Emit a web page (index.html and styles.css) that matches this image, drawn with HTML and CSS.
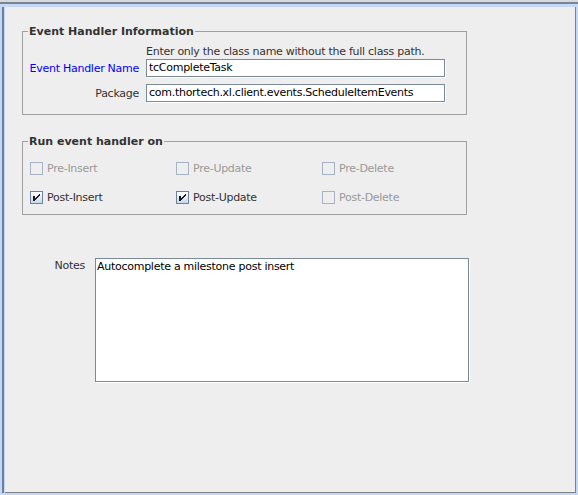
FILE: index.html
```html
<!DOCTYPE html>
<html>
<head>
<meta charset="utf-8">
<link rel="stylesheet" href="styles.css">
</head>
<body>
<div class="titlebar"></div>
<div class="frame">
  <div class="pane">
    <div class="content">
      <fieldset class="group group-info">
        <legend>Event Handler Information</legend>
        <div class="hint">Enter only the class name without the full class path.</div>
        <div class="form">
          <label class="lbl lbl-blue">Event Handler Name</label>
          <div class="field">tcCompleteTask</div>
          <label class="lbl">Package</label>
          <div class="field">com.thortech.xl.client.events.ScheduleItemEvents</div>
        </div>
      </fieldset>
      <fieldset class="group group-run">
        <legend>Run event handler on</legend>
        <div class="checks">
          <div class="check disabled"><span class="cb"></span><span class="cl">Pre-Insert</span></div>
          <div class="check disabled"><span class="cb"></span><span class="cl">Pre-Update</span></div>
          <div class="check disabled"><span class="cb"></span><span class="cl">Pre-Delete</span></div>
          <div class="check"><span class="cb on"><svg width="11" height="11" viewBox="1 1 11 11"><path d="M3 5h2v5h-2z M9 3h1v2h-1z M8 4h1v2h-1z M7 5h1v2h-1z M6 6h1v2h-1z M5 7h1v2h-1z" fill="#1a1a1a"/></svg></span><span class="cl">Post-Insert</span></div>
          <div class="check"><span class="cb on"><svg width="11" height="11" viewBox="1 1 11 11"><path d="M3 5h2v5h-2z M9 3h1v2h-1z M8 4h1v2h-1z M7 5h1v2h-1z M6 6h1v2h-1z M5 7h1v2h-1z" fill="#1a1a1a"/></svg></span><span class="cl">Post-Update</span></div>
          <div class="check disabled"><span class="cb"></span><span class="cl">Post-Delete</span></div>
        </div>
      </fieldset>
      <div class="notes">
        <div class="notes-label">Notes</div>
        <div class="textarea">Autocomplete a milestone post insert</div>
      </div>
    </div>
  </div>
</div>
</body>
</html>
```
FILE: styles.css
```css
html, body {
  margin: 0;
  padding: 0;
}
body {
  width: 578px;
  height: 495px;
  overflow: hidden;
  background: #c6d8f4;
  font-family: "DejaVu Sans", sans-serif;
  font-size: 11px;
  letter-spacing: -0.27px;
  color: #333333;
}
.titlebar {
  height: 2px;
  background: #d9d9d9;
  border-bottom: 2px solid #77859b;
}
.frame {
  padding: 3px 2px 2px 2px;
}
.pane {
  border-left: 2px solid #6b7fa0;
  padding-left: 1px;
}
.content {
  box-sizing: border-box;
  height: 486px;
  background: #eeeeee;
  border-right: 1px solid #808080;
  border-bottom: 1px solid #808080;
  padding-top: 18px;
}
.group {
  box-sizing: border-box;
  width: 445px;
  margin: 0 0 0 17px;
  border: 1px solid #a0a0a0;
  min-width: 0;
}
.group legend {
  padding: 0 1px;
  font-weight: bold;
  line-height: 13px;
  letter-spacing: 0;
  color: #333333;
}
.group-info {
  padding: 7px 0 12px 5px;
}
.hint {
  margin-left: 118px;
  margin-bottom: 1px;
  line-height: 13px;
}
.form {
  display: grid;
  grid-template-columns: 111px 300px;
  column-gap: 7px;
  row-gap: 7px;
  align-items: center;
}
.lbl {
  text-align: right;
  line-height: 13px;
  white-space: nowrap;
}
.lbl-blue {
  color: #0000ff;
}
.field {
  box-sizing: border-box;
  width: 299px;
  height: 18px;
  border: 1px solid #7a8a99;
  box-shadow: 1px 1px 0 #ffffff;
  background: #ffffff;
  color: #000000;
  padding: 0 2px;
  line-height: 16px;
  white-space: nowrap;
  overflow: hidden;
}
.group-run {
  margin-top: 20px;
  padding: 14px 0 10px 5px;
}
.checks {
  margin-left: 2px;
  display: grid;
  grid-template-columns: repeat(3, 146px);
  grid-auto-rows: 13px;
  row-gap: 16px;
}
.check {
  display: flex;
  align-items: center;
  line-height: 13px;
  white-space: nowrap;
}
.cb {
  box-sizing: border-box;
  width: 13px;
  height: 13px;
  margin-right: 4px;
  border: 1px solid #a6b3c4;
  display: flex;
  flex: none;
}
.cb.on {
  border-color: #6e829e;
  background: linear-gradient(#ffffff, #c8d8ee);
}
.check.disabled .cl {
  color: #999999;
}
.notes {
  display: flex;
  align-items: flex-start;
  margin-top: 43px;
  column-gap: 10px;
}
.notes-label {
  width: 80px;
  text-align: right;
  line-height: 13px;
  padding-top: 1px;
}
.textarea {
  box-sizing: border-box;
  width: 374px;
  height: 124px;
  border: 1px solid #7a8a99;
  box-shadow: 1px 1px 0 #ffffff;
  background: #ffffff;
  color: #000000;
  padding: 1px 1px;
  line-height: 13px;
}
```
